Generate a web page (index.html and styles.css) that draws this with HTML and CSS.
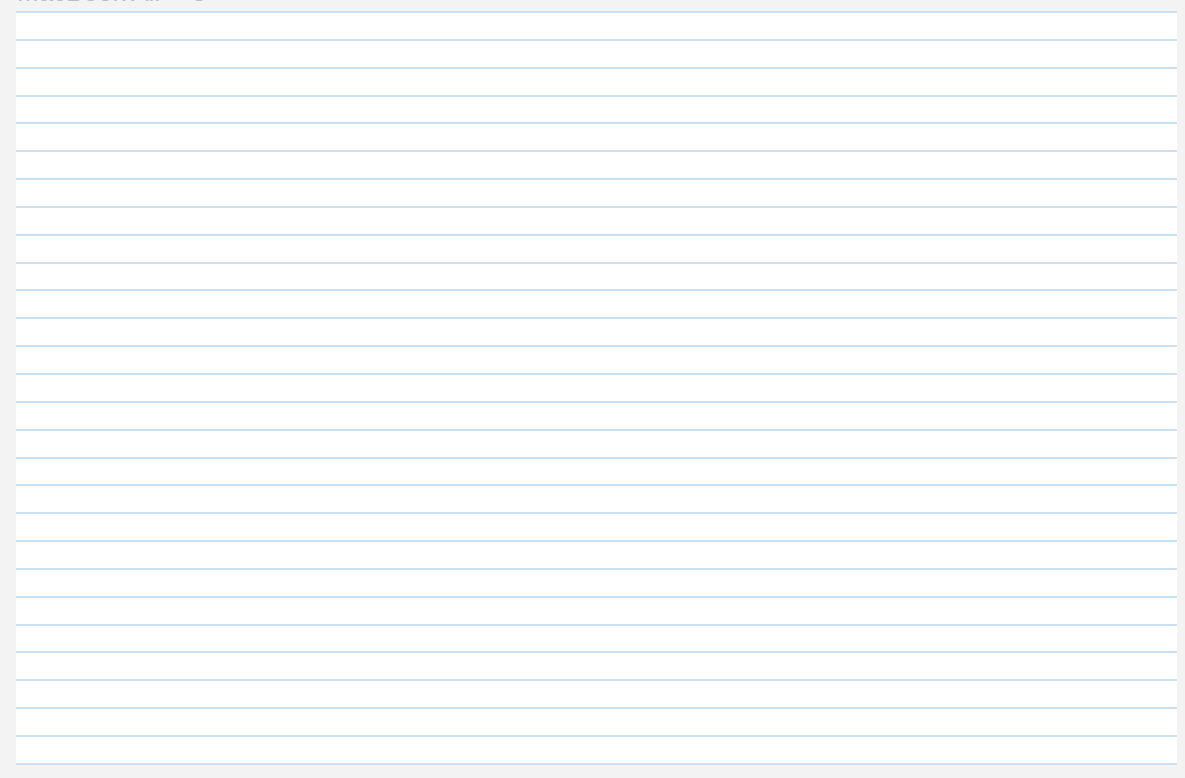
FILE: index.html
```html
<!DOCTYPE html>
<html>
<head>
<meta charset="utf-8">
<link rel="stylesheet" href="styles.css">
</head>
<body>
<div class="page">
  <div class="header"><div class="title">MacBook Air – 3</div></div>
  <div class="sheet">
    <div class="row"></div><div class="row"></div><div class="row"></div><div class="row"></div>
    <div class="row"></div><div class="row"></div><div class="row"></div><div class="row"></div>
    <div class="row"></div><div class="row"></div><div class="row"></div><div class="row"></div>
    <div class="row"></div><div class="row"></div><div class="row"></div><div class="row"></div>
    <div class="row"></div><div class="row"></div><div class="row"></div><div class="row"></div>
    <div class="row"></div><div class="row"></div><div class="row"></div><div class="row"></div>
    <div class="row"></div><div class="row"></div><div class="row"></div>
  </div>
</div>
</body>
</html>
```
FILE: styles.css
```css
html, body {
  margin: 0;
  padding: 0;
  background: #f3f3f3;
  overflow: hidden;
}
.page {
  width: 1185px;
  height: 778px;
  display: flex;
  flex-direction: column;
  font-family: "Liberation Sans", Arial, sans-serif;
}
.header {
  height: 11px;
  padding-left: 17px;
  overflow: visible;
}
.title {
  margin-top: -21px;
  font-size: 26px;
  line-height: 26px;
  color: #bcbcbc;
  white-space: nowrap;
}
.sheet {
  margin-left: 16px;
  width: 1161px;
  background: #ffffff;
  border-top: 2px solid #cbe0f1;
  display: flex;
  flex-direction: column;
}
.row {
  height: 25.85px;
  border-bottom: 2px solid #cbe0f1;
}
```
